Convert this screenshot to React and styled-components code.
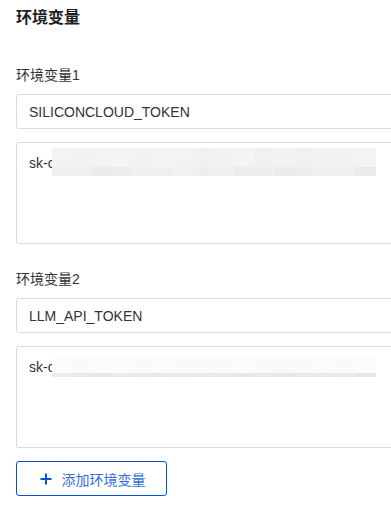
import React from "react";
import styled, { createGlobalStyle } from "styled-components";

const GlobalStyle = createGlobalStyle`
  html, body {
    margin: 0;
    padding: 0;
    background: #ffffff;
    overflow: hidden;
  }
  body {
    font-family: "Liberation Sans", "Noto Sans CJK SC", sans-serif;
    color: #333333;
  }
`;

const Page = styled.div`
  width: 430px;
  padding: 6px 0 0 16px;
  box-sizing: border-box;
`;

const Title = styled.h2`
  margin: 0 0 34px;
  font-size: 16px;
  line-height: 24px;
  font-weight: 700;
  color: #1f1f1f;
`;

const Section = styled.div`
  display: flex;
  flex-direction: column;
  margin-bottom: 24px;
`;

const Label = styled.div`
  font-size: 14px;
  line-height: 22px;
  color: #333333;
  margin-bottom: 8px;
`;

const NameInput = styled.div`
  height: 35px;
  box-sizing: border-box;
  border: 1px solid #dcdcdc;
  border-radius: 2px;
  padding: 0 12px;
  display: flex;
  align-items: center;
  font-size: 14px;
  color: #333333;
  margin-bottom: 13px;
`;

const ValueBox = styled.div`
  height: 102px;
  box-sizing: border-box;
  border: 1px solid #dcdcdc;
  border-radius: 2px;
  padding: 9px 12px;
  display: flex;
  align-items: flex-start;
  font-size: 14px;
  line-height: 22px;
  color: #333333;
`;

const Prefix = styled.span`
  flex: none;
`;

const Mosaic = styled.div`
  display: grid;
  grid-template-columns: repeat(16, 20.25px);
  grid-template-rows: ${({ rows }) => rows};
  margin-top: ${({ offset }) => offset}px;
  margin-left: -3px;
`;

const Cell = styled.div`
  background: ${({ shade }) => shade};
`;

const AddButton = styled.button`
  margin-top: -11px;
  width: 151px;
  height: 35px;
  box-sizing: border-box;
  border: 1px solid #0052d9;
  border-radius: 3px;
  background: #ffffff;
  color: #2f6fdb;
  font-family: "Liberation Sans", "Noto Sans CJK SC", sans-serif;
  font-size: 14px;
  display: flex;
  align-items: center;
  justify-content: center;
  gap: 10px;
  padding: 0 0 0 2px;
  cursor: pointer;
`;

const topA = ["#f3f3f3","#f2f2f2","#f3f3f3","#f4f4f4","#f2f2f2","#f4f4f4","#f3f3f3","#f1f1f1","#f2f2f2","#f4f4f4","#f1f1f1","#f2f2f2","#f1f1f1","#f2f2f2","#f2f2f2","#f4f4f4"];
const botA = ["#f0f0f0","#efefef","#ebebeb","#eeeeee","#f0f0f0","#efefef","#f1f1f1","#eeeeee","#f0f0f0","#ececec","#eeeeee","#ebebeb","#eeeeee","#f0f0f0","#f0f0f0","#ebebeb"];
const topB = ["#fbfbfb","#fafafa","#fbfbfb","#fcfcfc","#fafafa","#fbfbfb","#fafafa","#f9f9f9","#fafafa","#fbfbfb","#fafafa","#f9f9f9","#fafafa","#fbfbfb","#fafafa","#fbfbfb"];
const botB = ["#ececec","#e9e9e9","#e6e6e6","#eaeaea","#ebebeb","#e8e8e8","#ebebeb","#e9e9e9","#eaeaea","#e7e7e7","#e9e9e9","#e6e6e6","#e9e9e9","#eaeaea","#ebebeb","#e6e6e6"];

const envs = [
  { name: "SILICONCLOUD_TOKEN", top: topA, bottom: botA, rows: "19px 9px", offset: -4 },
  { name: "LLM_API_TOKEN", top: topB, bottom: botB, rows: "16px 4px", offset: 1 },
];

const PlusIcon = () => (
  <svg width="12" height="12" viewBox="0 0 12 12">
    <path d="M6 0.5v11M0.5 6h11" stroke="#0052d9" strokeWidth="2" fill="none" />
  </svg>
);

const App = () => (
  <Page>
    <GlobalStyle />
    <Title>环境变量</Title>
    {envs.map((env, i) => (
      <Section key={env.name}>
        <Label>环境变量{i + 1}</Label>
        <NameInput>{env.name}</NameInput>
        <ValueBox>
          <Prefix>sk-c</Prefix>
          <Mosaic rows={env.rows} offset={env.offset}>
            {env.top.map((c, j) => (
              <Cell key={"t" + j} shade={c} />
            ))}
            {env.bottom.map((c, j) => (
              <Cell key={"b" + j} shade={c} />
            ))}
          </Mosaic>
        </ValueBox>
      </Section>
    ))}
    <AddButton>
      <PlusIcon />
      添加环境变量
    </AddButton>
  </Page>
);

export default App;
